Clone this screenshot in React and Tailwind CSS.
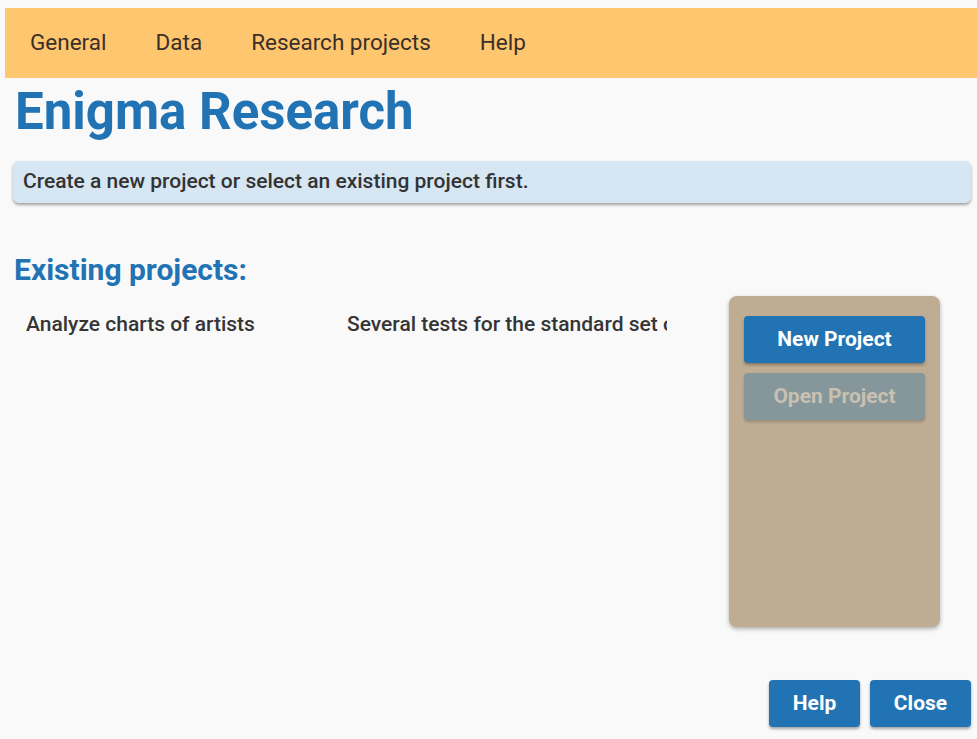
import React from 'react';

const menu = ['General', 'Data', 'Research projects', 'Help'];

const projects = [
    { name: 'Analyze charts of artists', description: 'Several tests for the standard set of charts' },
];

const App = () => {
    return (
        <div className="min-h-screen bg-[#f9f9f9] pt-2 pl-[5px] font-['Roboto',sans-serif] text-[#333]">
            {/* top menu */}
            <nav className="h-[70px] bg-[#ffc670] flex items-center pl-[25px] gap-[49px] text-[22.5px] text-[#3a3029]">
                {menu.map((item) => (
                    <span key={item}>{item}</span>
                ))}
            </nav>

            <div className="pl-[8px] pr-[6px]">
                <h1 className="text-[51px] font-bold text-[#2173b3] leading-none pt-[8px] pl-[2px] h-[70px]">Enigma Research</h1>

                <div className="mt-[13px] h-[42px] rounded-md bg-[#d6e6f3] shadow-[0_2px_3px_rgba(0,0,0,0.35)] flex items-center pl-[10px] text-[21px] font-medium text-[#333]">
                    Create a new project or select an existing project first.
                </div>

                <h2 className="mt-[52px] pl-[1px] text-[30px] font-bold text-[#2173b3] leading-none">Existing projects:</h2>

                <div className="flex mt-[11px]">
                    <div className="flex-1 pt-[13px]">
                        {projects.map((p) => (
                            <div key={p.name} className="flex text-[21px] font-medium text-[#353535]">
                                <div className="w-[334px] pl-[13px] truncate">{p.name}</div>
                                <div className="w-[320px] overflow-hidden whitespace-nowrap">{p.description}</div>
                            </div>
                        ))}
                    </div>

                    <div className="w-[211px] h-[331px] mr-[31px] rounded-lg bg-[#bfad93] shadow-[0_2px_4px_rgba(0,0,0,0.3)] px-[15px] pt-[20px] flex flex-col gap-[10px]">
                        <button className="h-[47px] rounded bg-[#2173b3] text-white text-[21px] font-bold shadow-[0_2px_3px_rgba(0,0,0,0.3)]">
                            New Project
                        </button>
                        <button className="h-[47px] rounded bg-[#85979b] text-[#c9c0b0] text-[21px] font-bold shadow-[0_2px_3px_rgba(0,0,0,0.2)]">
                            Open Project
                        </button>
                    </div>
                </div>

                <div className="flex justify-end gap-[10px] mt-[53px]">
                    <button className="w-[91px] h-[47px] rounded bg-[#2173b3] text-white text-[21px] font-bold shadow-[0_2px_3px_rgba(0,0,0,0.35)]">
                        Help
                    </button>
                    <button className="w-[101px] h-[47px] rounded bg-[#2173b3] text-white text-[21px] font-bold shadow-[0_2px_3px_rgba(0,0,0,0.35)]">
                        Close
                    </button>
                </div>
            </div>
        </div>
    );
};

export default App;
